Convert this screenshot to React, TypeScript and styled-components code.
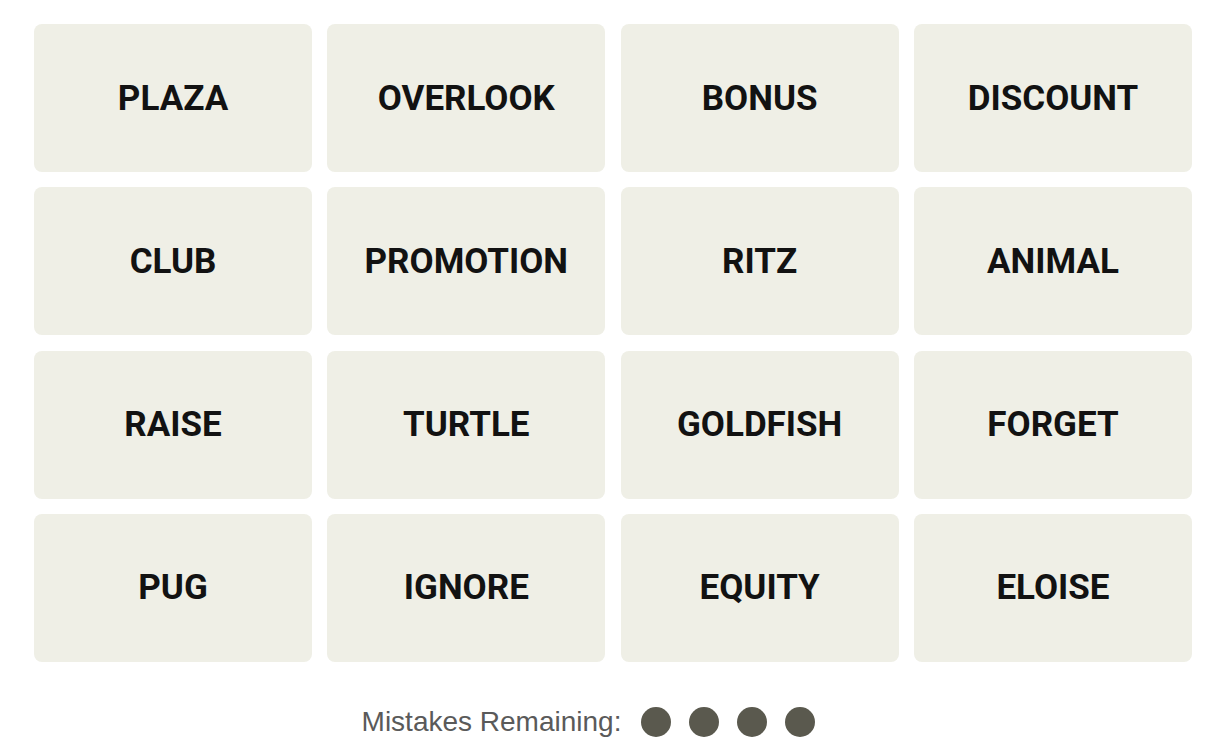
import React from 'react';
import styled, { createGlobalStyle } from 'styled-components';

const GlobalStyle = createGlobalStyle`
  html, body {
    margin: 0;
    padding: 0;
    background: #ffffff;
  }
`;

const Page = styled.div`
  padding: 24px 27px 0 34px;
  font-family: 'Roboto', 'Liberation Sans', sans-serif;
`;

const Board = styled.div`
  display: grid;
  grid-template-columns: repeat(4, 278px);
  grid-auto-rows: 148px;
  column-gap: 15.33px;
  row-gap: 15.33px;
`;

const Tile = styled.button`
  display: flex;
  align-items: center;
  justify-content: center;
  border: none;
  border-radius: 8px;
  background: #efefe6;
  color: #121212;
  font-family: 'Roboto', 'Liberation Sans', sans-serif;
  font-weight: 700;
  font-size: 35px;
  text-transform: uppercase;
  cursor: pointer;
  padding: 0;
`;

const Mistakes = styled.div`
  display: flex;
  align-items: center;
  justify-content: center;
  margin-top: 45px;
  height: 30px;
  padding-right: 49px;
`;

const Label = styled.span`
  font-family: 'Liberation Sans', Arial, sans-serif;
  font-size: 28px;
  color: #5a5a5a;
  margin-right: 20px;
`;

const Dots = styled.div`
  display: flex;
  gap: 18px;
`;

const Dot = styled.span`
  width: 30px;
  height: 30px;
  border-radius: 50%;
  background: #5a594e;
`;

const words = [
  'PLAZA', 'OVERLOOK', 'BONUS', 'DISCOUNT',
  'CLUB', 'PROMOTION', 'RITZ', 'ANIMAL',
  'RAISE', 'TURTLE', 'GOLDFISH', 'FORGET',
  'PUG', 'IGNORE', 'EQUITY', 'ELOISE',
];

export default function App() {
  return (
    <>
      <GlobalStyle />
      <Page>
        <Board>
          {words.map((w) => (
            <Tile key={w}>{w}</Tile>
          ))}
        </Board>
        <Mistakes>
          <Label>Mistakes Remaining:</Label>
          <Dots>
            {[0, 1, 2, 3].map((i) => (
              <Dot key={i} />
            ))}
          </Dots>
        </Mistakes>
      </Page>
    </>
  );
}
